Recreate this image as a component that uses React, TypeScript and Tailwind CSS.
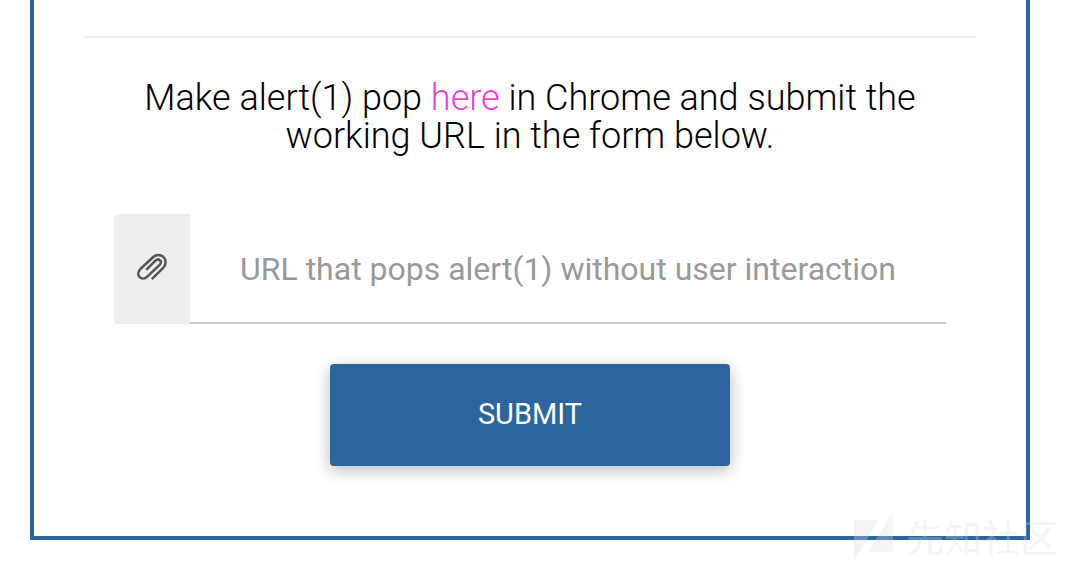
function Paperclip() {
  return (
    <svg
      className="h-7 w-8"
      viewBox="0 0 32 28"
      fill="none"
      stroke="#555"
      strokeWidth="2.5"
      aria-hidden="true"
    >
      <path d="M15.8 26.2 L27.4 14.6 C30.2 11.6 30.4 7 27.6 4.2 C24.6 1.2 20 1.4 17.2 4 L4.4 16 C1.8 18.6 1.6 22 3.6 24.1 C5.6 26.1 8.8 26 11 23.9 L23.4 12.2 C25.1 10.6 25.3 8.7 24.1 7.4 C22.8 6.1 20.8 6.2 19.4 7.6 L10.2 16.8" />
    </svg>
  );
}

function Watermark() {
  return (
    <div className="pointer-events-none absolute right-4.5 bottom-0 flex items-center gap-3 text-[#dcdcdc]/30">
      <svg className="h-12 w-10" viewBox="0 0 40 48" fill="currentColor" aria-hidden="true">
        <path d="M0 8H25L0 48Z M39 0V40H14Z" />
      </svg>
      <span className="font-['Noto_Sans_CJK_SC',sans-serif] text-[38px] leading-14 font-normal">
        先知社区
      </span>
    </div>
  );
}

export default function App() {
  return (
    <div className="relative bg-white px-[30px] pb-6 font-[Roboto,sans-serif] text-black">
      <main className="mr-4 border-x-4 border-b-4 border-[#2b659f] px-[50px] pt-9 pb-[70px]">
        <hr className="border-t-2 border-[#eee]" />
        <p className="mt-[41px] px-8 text-center text-4xl leading-[38px] font-light">
          Make alert(1) pop{" "}
          <a href="#challenge" className="text-[#e83fdf]">
            here
          </a>{" "}
          in Chrome and submit the working URL in the form below.
        </p>
        <form className="mt-[59px] px-[30px]" onSubmit={(e) => e.preventDefault()}>
          <div className="flex h-[110px]">
            <label
              htmlFor="url"
              aria-label="URL"
              className="flex w-[76px] shrink-0 items-center justify-center rounded-l bg-[#eee] pb-1"
            >
              <Paperclip />
            </label>
            <input
              id="url"
              type="text"
              placeholder="URL that pops alert(1) without user interaction"
              className="min-w-0 flex-1 border-b-2 border-[#ccc] bg-transparent pt-0.5 text-center text-[32px] outline-none placeholder:text-[#999]"
            />
          </div>
          <button
            type="submit"
            className="mx-auto mt-10 block h-[102px] w-[400px] max-w-full rounded bg-[#2c649d] text-[29px] text-white shadow-[0_4px_16px_rgba(0,0,0,0.28)]"
          >
            SUBMIT
          </button>
        </form>
      </main>
      <Watermark />
    </div>
  );
}
